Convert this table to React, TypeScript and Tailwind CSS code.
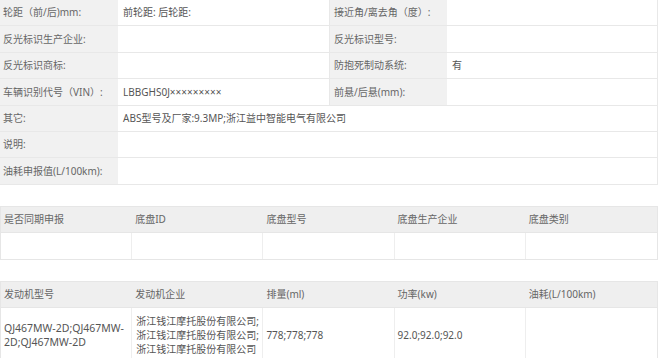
import React from 'react'

const font = { fontFamily: '"Noto Sans", "Noto Sans CJK SC", sans-serif' }

type Row = { l1: string; v1: string; l2?: string; v2?: string; h: string }

const topRows: Row[] = [
  { l1: '轮距（前/后)mm:', v1: '前轮距: 后轮距:', l2: '接近角/离去角（度）:', v2: '', h: 'h-[26px]' },
  { l1: '反光标识生产企业:', v1: '', l2: '反光标识型号:', v2: '', h: 'h-[27px]' },
  { l1: '反光标识商标:', v1: '', l2: '防抱死制动系统:', v2: '有', h: 'h-[26px]' },
  { l1: '车辆识别代号（VIN）:', v1: 'LBBGHS0J×××××××××', l2: '前悬/后悬(mm):', v2: '', h: 'h-[27px]' },
  { l1: '其它:', v1: 'ABS型号及厂家:9.3MP;浙江益中智能电气有限公司', h: 'h-[26px]' },
  { l1: '说明:', v1: '', h: 'h-[26px]' },
  { l1: '油耗申报值(L/100km):', v1: '', h: 'h-[27px]' },
]

function InfoTable() {
  return (
    <div className="w-[658px] border-r border-[#e8e8e8]">
      {topRows.map((r, i) => (
        <div key={i} className={`flex ${r.h} border-b border-[#e8e8e8]`}>
          <div className="w-[119px] shrink-0 bg-[#f1f1f1] border-r border-white flex items-center pl-[3px] text-[#666]">
            {r.l1}
          </div>
          {r.l2 !== undefined ? (
            <>
              <div className="w-[211px] shrink-0 flex items-center pl-[4px] text-[#555] border-r border-[#e8e8e8]">
                {r.v1}
              </div>
              <div className="w-[118px] shrink-0 bg-[#f1f1f1] border-r border-white flex items-center pl-[4px] text-[#666]">
                {r.l2}
              </div>
              <div className="flex-1 flex items-center pl-[4px] text-[#555]">{r.v2}</div>
            </>
          ) : (
            <div className="flex-1 flex items-center pl-[4px] text-[#555]">{r.v1}</div>
          )}
        </div>
      ))}
    </div>
  )
}

function GridTable({ head, body, bodyH }: { head: string[]; body: React.ReactNode[]; bodyH: string }) {
  return (
    <div className="w-[658px] border border-[#e6e6e6]">
      <div className="grid grid-cols-5 h-[26px] bg-[#efefef] border-b border-[#e6e6e6]">
        {head.map((h, i) => (
          <div key={i} className="flex items-center pl-[3px] text-[#666]">
            {h}
          </div>
        ))}
      </div>
      <div className={`grid grid-cols-5 ${bodyH}`}>
        {body.map((c, i) => (
          <div
            key={i}
            className={`flex items-center pl-[3px] text-[#555] leading-[14px] ${i < 4 ? 'border-r border-[#eeeeee]' : ''}`}
          >
            {c}
          </div>
        ))}
      </div>
    </div>
  )
}

export default function App() {
  return (
    <div className="w-[660px] h-[358px] overflow-hidden bg-white text-[10px]" style={font}>
      <InfoTable />

      <div className="mt-[21px]">
        <GridTable
          head={['是否同期申报', '底盘ID', '底盘型号', '底盘生产企业', '底盘类别']}
          body={['', '', '', '', '']}
          bodyH="h-[26px]"
        />
      </div>

      <div className="mt-[21px]">
        <GridTable
          head={['发动机型号', '发动机企业', '排量(ml)', '功率(kw)', '油耗(L/100km)']}
          body={[
            <span className="text-[10.5px] leading-[14px]">
              QJ467MW-2D;QJ467MW-
              <br />
              2D;QJ467MW-2D
            </span>,
            <span className="pl-[1px]">
              浙江钱江摩托股份有限公司;
              <br />
              浙江钱江摩托股份有限公司;
              <br />
              浙江钱江摩托股份有限公司
            </span>,
            <span>778;778;778</span>,
            '92.0;92.0;92.0',
            '',
          ]}
          bodyH="h-[54px]"
        />
      </div>
    </div>
  )
}
